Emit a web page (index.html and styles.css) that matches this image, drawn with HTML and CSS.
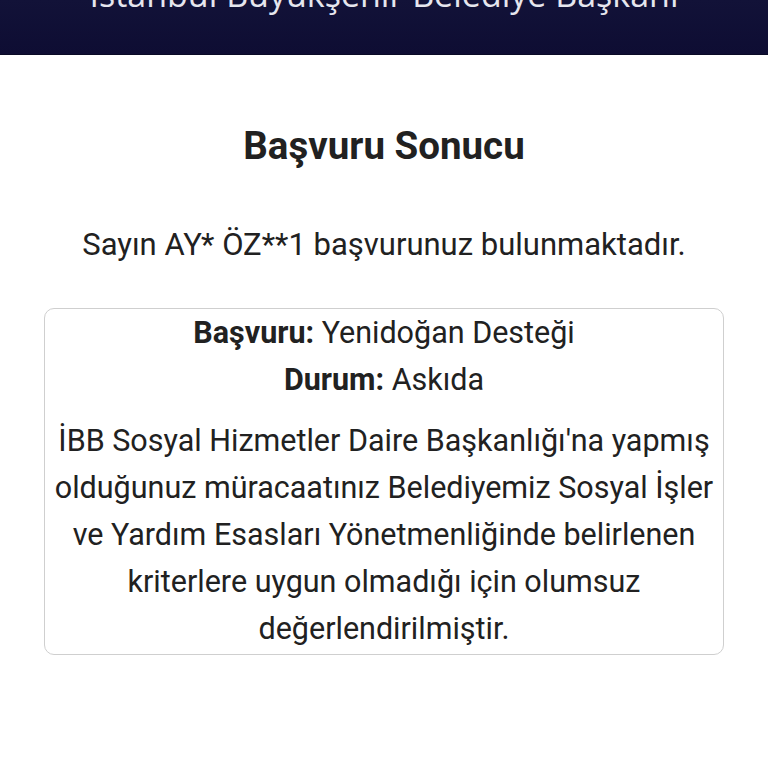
FILE: index.html
```html
<!DOCTYPE html>
<html lang="tr">
<head>
<meta charset="utf-8">
<link rel="stylesheet" href="styles.css">
</head>
<body>
<header class="topbar">
  <div class="topbar-title">İstanbul Büyükşehir Belediye Başkanı</div>
</header>
<main class="content">
  <h1 class="title">Başvuru Sonucu</h1>
  <p class="greeting">Sayın AY* ÖZ**1 başvurunuz bulunmaktadır.</p>
  <section class="result-box">
    <div class="row"><strong>Başvuru:</strong> Yenidoğan Desteği</div>
    <div class="row"><strong>Durum:</strong> Askıda</div>
    <p class="message">İBB Sosyal Hizmetler Daire Başkanlığı'na yapmış olduğunuz müracaatınız Belediyemiz Sosyal İşler ve Yardım Esasları Yönetmenliğinde belirlenen kriterlere uygun olmadığı için olumsuz değerlendirilmiştir.</p>
  </section>
</main>
</body>
</html>
```

FILE: styles.css
```css
html, body {
  margin: 0;
  padding: 0;
  background: #ffffff;
}
body {
  font-family: Roboto, "Liberation Sans", sans-serif;
  color: #212121;
}
.topbar {
  height: 55px;
  overflow: hidden;
  background: linear-gradient(#121238, #0e0d33);
  border-bottom: 1px solid #0a0a26;
  box-sizing: border-box;
}
.topbar-title {
  margin-top: -26px;
  text-align: center;
  color: #e6e6ee;
  font-family: "Open Sans", "DejaVu Sans", sans-serif;
  font-size: 34px;
  line-height: 40px;
  white-space: nowrap;
}
.content {
  padding: 0 44px;
}
.title {
  margin: 69px 0 0;
  text-align: center;
  font-size: 38.5px;
  line-height: 43px;
  font-weight: 700;
  color: #212121;
}
.greeting {
  margin: 54px 0 0;
  text-align: center;
  font-size: 31px;
  line-height: 47px;
}
.result-box {
  margin-top: 40px;
  border: 1px solid #cfcfcf;
  border-radius: 10px;
  padding: 0 0 2px;
  text-align: center;
  font-size: 30.5px;
  line-height: 47px;
}
.row strong {
  font-weight: 700;
}
.message {
  margin: 14px 0 0;
}
```
